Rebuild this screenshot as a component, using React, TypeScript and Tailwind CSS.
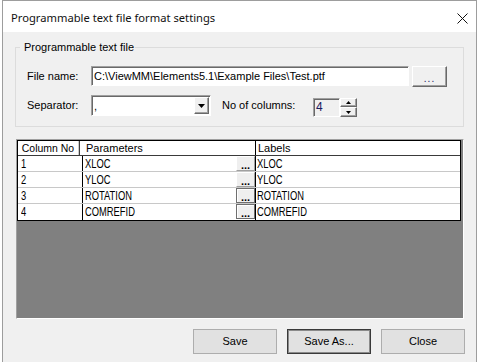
import React from "react";

const ROWS = [
  { no: "1", param: "XLOC", label: "XLOC", raised: false },
  { no: "2", param: "YLOC", label: "YLOC", raised: false },
  { no: "3", param: "ROTATION", label: "ROTATION", raised: true },
  { no: "4", param: "COMREFID", label: "COMREFID", raised: true },
];

const UI_FONT = { fontFamily: '"Liberation Sans", Arial, sans-serif' };

function CloseIcon() {
  return (
    <svg width="11" height="11" viewBox="0 0 11 11" className="block">
      <path d="M0.5 0.5 L10.5 10.5 M10.5 0.5 L0.5 10.5" stroke="#111" strokeWidth="1" />
    </svg>
  );
}

function Arrow({ dir }: { dir: "up" | "down" }) {
  return (
    <svg width="5" height="3" viewBox="0 0 5 3" className="block">
      {dir === "up" ? <path d="M2.5 0 L5 3 L0 3 Z" fill="#000" /> : <path d="M0 0 L5 0 L2.5 3 Z" fill="#000" />}
    </svg>
  );
}

function RaisedButton({ children, className = "" }: { children?: React.ReactNode; className?: string }) {
  return (
    <div
      className={`flex items-center justify-center bg-[#f0f0f0] border-t border-l border-t-white border-l-white border-r border-b border-r-[#696969] border-b-[#696969] shadow-[inset_-1px_-1px_0_#a0a0a0] ${className}`}
    >
      {children}
    </div>
  );
}

// narrow bitmap-ish grid text
function Cell({ children }: { children: React.ReactNode }) {
  return <span className="inline-block origin-left scale-x-[0.72] whitespace-nowrap">{children}</span>;
}

export default function App() {
  return (
    <div className="w-[479px] h-[362px] overflow-hidden bg-white px-[2px] text-black" style={UI_FONT}>
      <div className="h-full flex flex-col border-x border-t border-[#9d9d9d] bg-[#f0f0f0]">
        {/* Title bar */}
        <div className="h-[31px] shrink-0 bg-white flex items-center justify-between pl-[8px] pr-[8px] pt-[3px]">
          <span className="text-[11.2px] text-[#111]" style={{ fontFamily: '"Noto Sans", "Open Sans", sans-serif' }}>
            Programmable text file format settings
          </span>
          <CloseIcon />
        </div>

        <div className="flex flex-col px-[12px]">
          {/* Group box */}
          <fieldset className="mt-[9px] border border-[#dcdcdc] pt-[13px] pb-[9px] text-[11px]">
            <legend className="ml-[4px] pl-[4px] pr-[1px] leading-[12px]">Programmable text file</legend>

            <div className="pl-[11px] flex flex-col gap-[8px]">
              <div className="flex items-start">
                <span className="w-[64px] h-[20px] leading-[20px]">File name:</span>
                <div className="w-[318px] h-[20px] bg-white border-t border-l border-[#a0a0a0] border-r border-b border-r-white border-b-white shadow-[inset_1px_1px_0_#696969] pl-[2px] leading-[18px] whitespace-nowrap overflow-hidden">
                  C:\ViewMM\Elements5.1\Example Files\Test.ptf
                </div>
                <RaisedButton className="ml-[3px] w-[35px] h-[21px]">
                  <span className="text-[10px] leading-none pt-[5px] tracking-[1px] text-[#202060]">...</span>
                </RaisedButton>
              </div>

              <div className="flex items-start">
                <span className="w-[64px] h-[21px] leading-[21px]">Separator:</span>
                <div className="w-[120px] h-[21px] flex bg-white border-t border-l border-[#a0a0a0] border-r border-b border-r-white border-b-white shadow-[inset_1px_1px_0_#696969] p-[1px] pl-[2px]">
                  <span className="flex-1 leading-[18px]">,</span>
                  <RaisedButton className="w-[15px] h-[17px]">
                    <svg width="7" height="4" viewBox="0 0 7 4" className="block">
                      <path d="M0 0 L7 0 L3.5 4 Z" fill="#000" />
                    </svg>
                  </RaisedButton>
                </div>
                <span className="ml-[11px] w-[91px] h-[21px] leading-[21px]">No of columns:</span>
                <div className="mt-[3px] flex">
                  <div className="w-[27px] h-[19px] bg-[#f0f0f0] border-t border-l border-[#a0a0a0] border-r border-b border-r-white border-b-white shadow-[inset_1px_1px_0_#696969] pl-[2px] leading-[17px] text-[12px] text-[#1a1a60]">
                    4
                  </div>
                  <div className="w-[17px] h-[19px] flex flex-col">
                    <RaisedButton className="h-[9px]">
                      <Arrow dir="up" />
                    </RaisedButton>
                    <RaisedButton className="h-[10px]">
                      <Arrow dir="down" />
                    </RaisedButton>
                  </div>
                </div>
              </div>
            </div>
          </fieldset>

          {/* Grid */}
          <div className="mt-[12px] ml-[1px] w-[448px] h-[180px] bg-[#808080] border-t border-l border-[#a0a0a0] border-r border-b border-r-white border-b-white">
            <div className="w-[444px] border border-black bg-white">
              <div className="grid grid-cols-[65px_173px_204px] h-[15px] border-b border-[#3a3a3a] text-[11px] leading-[14px]">
                <div className="border-r border-black pl-[4px] scale-x-[0.95] origin-left">Column No</div>
                <div className="border-r border-black pl-[3px]">Parameters</div>
                <div className="pl-[2px]">Labels</div>
              </div>
              {ROWS.map((r, i) => (
                <div
                  key={r.no}
                  className={`grid grid-cols-[65px_173px_204px] h-[16px] text-[13px] leading-[15px] ${
                    i < ROWS.length - 1 ? "border-b border-[#c8c8c8]" : ""
                  }`}
                >
                  <div className="border-r border-black pl-[3px]">
                    <Cell>{r.no}</Cell>
                  </div>
                  <div className="border-r border-black flex">
                    <span className="flex-1 pl-[2px]">
                      <Cell>{r.param}</Cell>
                    </span>
                    <div
                      className={`w-[19px] h-[15px] flex items-end justify-center bg-[#efefef] ${
                        r.raised
                          ? "border border-[#6f6f6f] shadow-[inset_1px_1px_0_#fff]"
                          : "border-t border-l border-white border-r border-b border-r-[#a0a0a0] border-b-[#a0a0a0]"
                      }`}
                    >
                      <span className="text-[11px] font-bold leading-[10px]">...</span>
                    </div>
                  </div>
                  <div className="pl-[1px]">
                    <Cell>{r.label}</Cell>
                  </div>
                </div>
              ))}
            </div>
          </div>

          {/* Buttons */}
          <div className="mt-[10px] -mr-[1px] flex justify-end gap-[10px] text-[11px]">
            <button className="w-[84px] h-[25px] bg-[#e1e1e1] border border-[#adadad]">Save</button>
            <button className="w-[84px] h-[25px] bg-[#e1e1e1] border border-[#3a3a3a] shadow-[inset_0_0_0_1px_#8a8a8a]">
              Save As...
            </button>
            <button className="w-[84px] h-[25px] bg-[#e1e1e1] border border-[#adadad]">Close</button>
          </div>
        </div>
      </div>
    </div>
  );
}
